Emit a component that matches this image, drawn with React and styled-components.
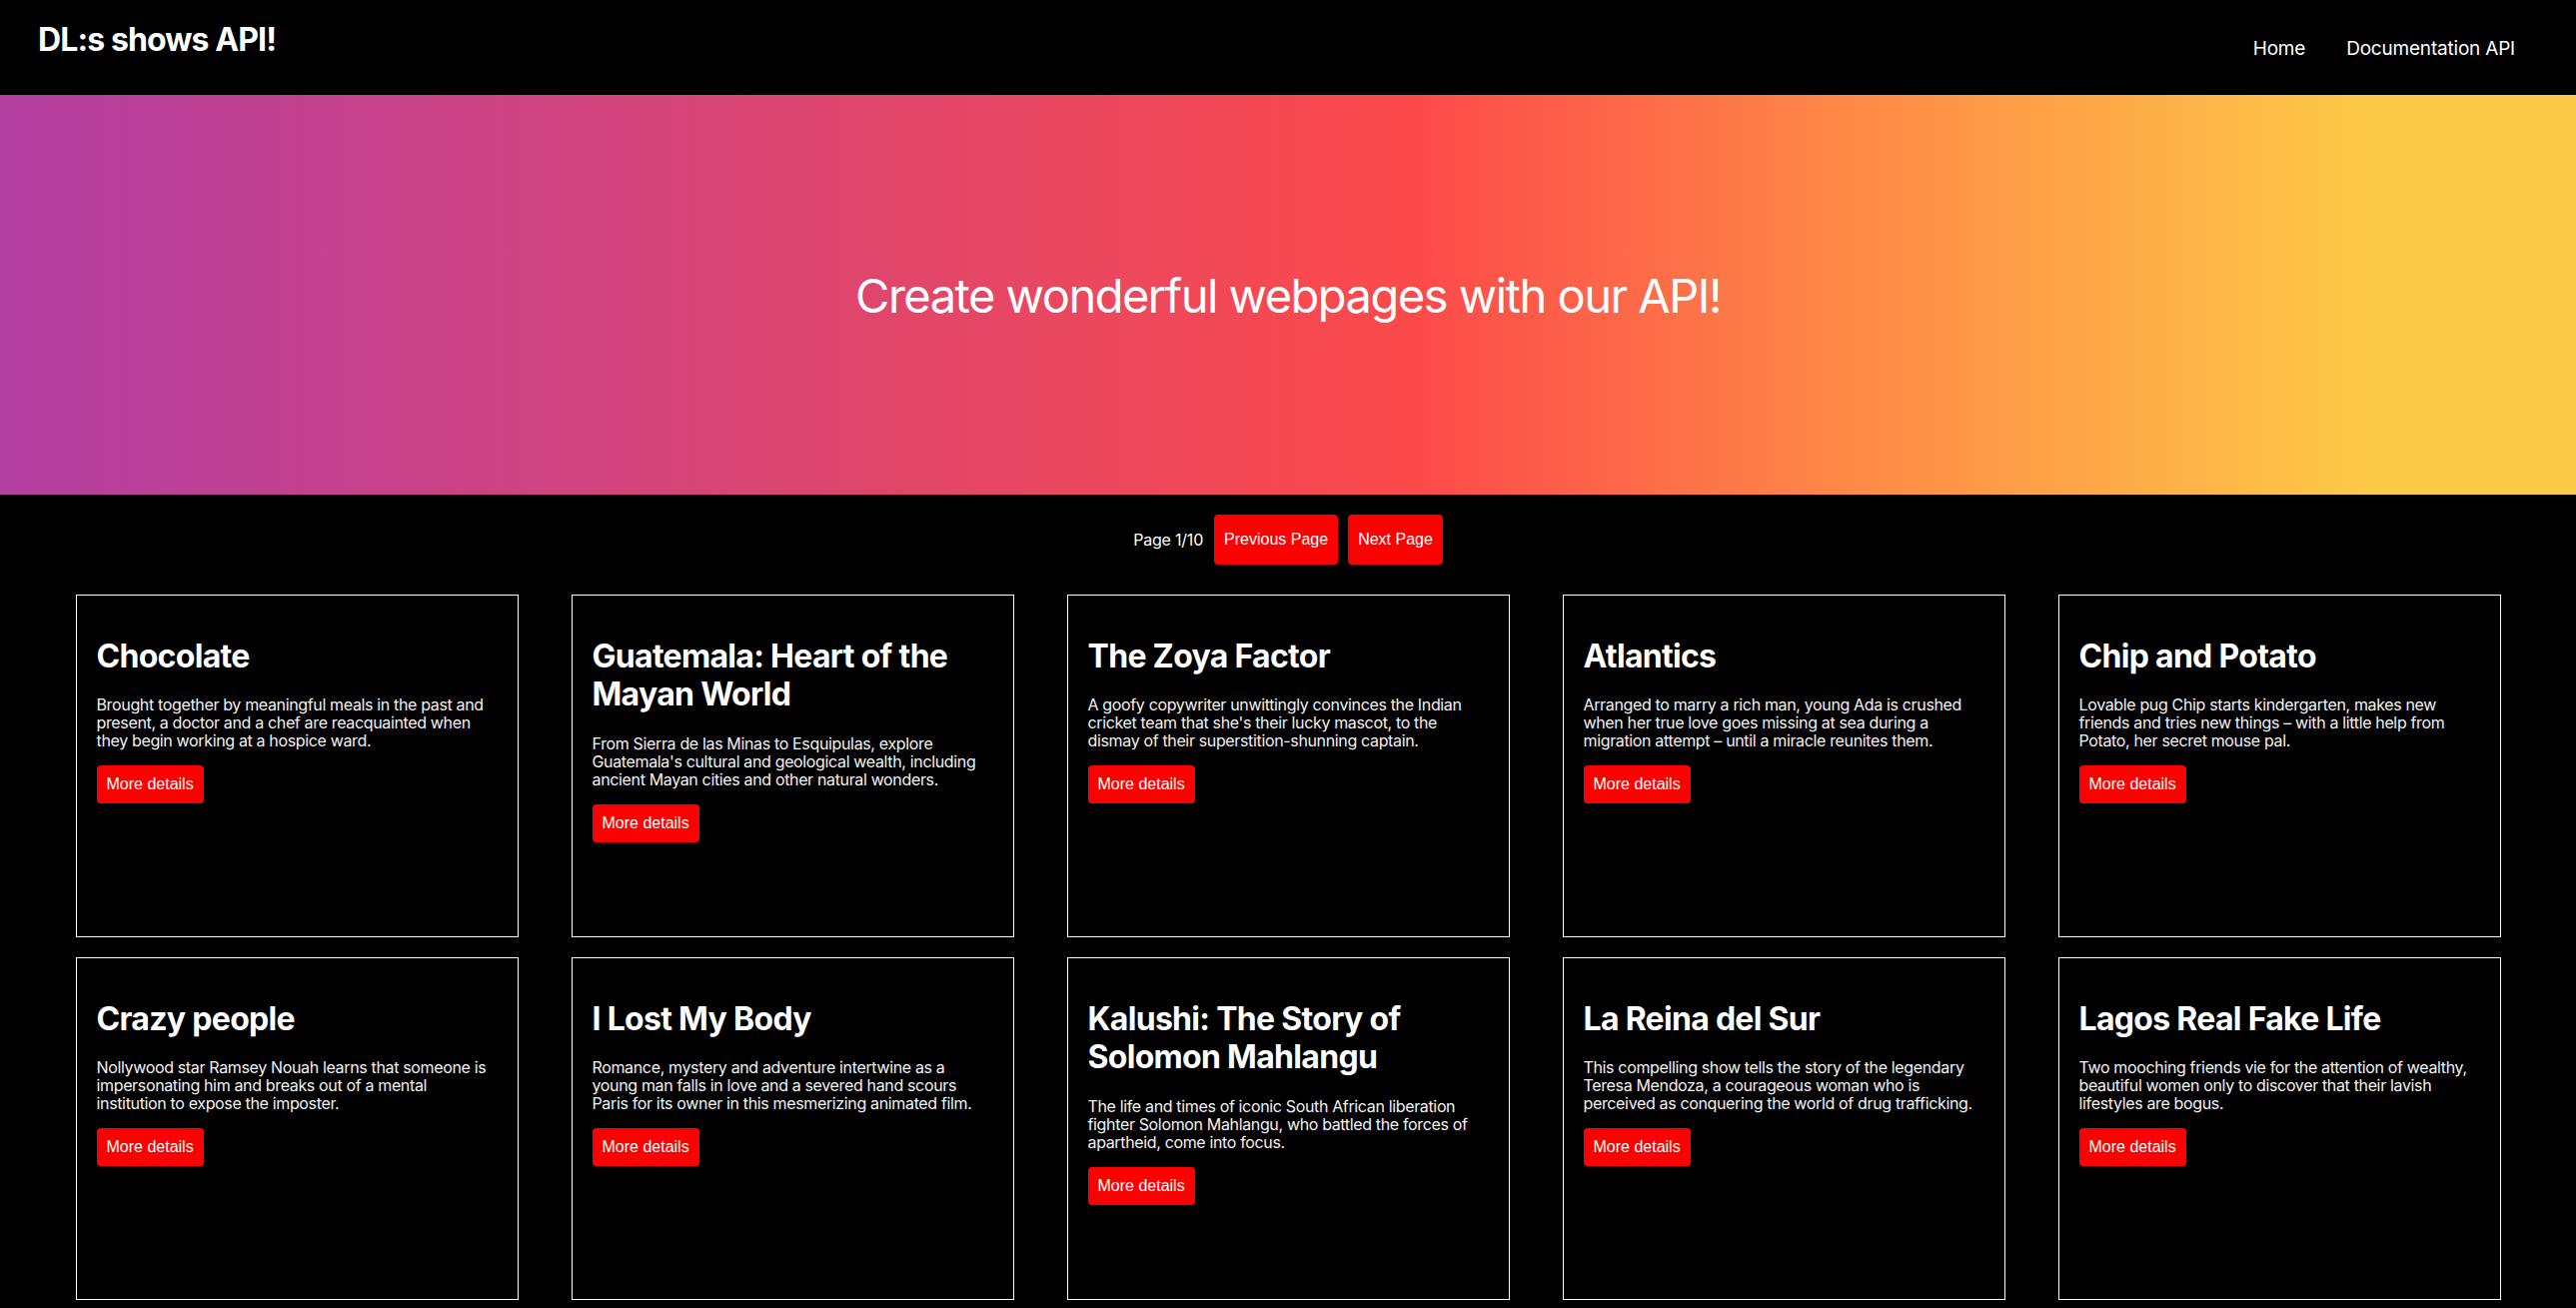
import React from "react";
import styled, { createGlobalStyle } from "styled-components";

const GlobalStyle = createGlobalStyle`
  html, body {
    margin: 0;
    padding: 0;
    background: #000;
  }
  body {
    font-family: Inter, "Noto Sans", sans-serif;
    color: #fff;
  }
  * { box-sizing: border-box; }
`;

const Page = styled.div`
  background: #000;
  min-height: 100vh;
`;

const Nav = styled.header`
  height: 95px;
  display: flex;
  align-items: center;
  justify-content: space-between;
  padding: 0 61px 0 38px;
`;

const Brand = styled.h1`
  margin: 0 0 14px;
  font-size: 32px;
  font-weight: 700;
  line-height: 1.2;
  letter-spacing: -0.9px;
`;

const Links = styled.nav`
  display: flex;
  gap: 41px;
  margin-top: 2px;
`;

const NavLink = styled.a`
  color: #fff;
  text-decoration: none;
  font-size: 19px;
  letter-spacing: -0.2px;
`;

const Hero = styled.section`
  height: 400px;
  display: flex;
  align-items: center;
  justify-content: center;
  background: linear-gradient(
    90deg,
    #b33fa2 0%,
    #d4447a 25%,
    #fc4a4a 55%,
    #fe8a47 72%,
    #fdca47 92%,
    #fdca47 100%
  );
`;

const HeroTitle = styled.h2`
  margin: 0;
  font-size: 47px;
  font-weight: 400;
  letter-spacing: -1.5px;
`;

const Pager = styled.div`
  display: flex;
  align-items: center;
  justify-content: center;
  gap: 10px;
  padding: 20px 0 30px;
`;

const PageLabel = styled.span`
  font-size: 16px;
  margin-right: 1px;
  letter-spacing: -0.2px;
`;

const RedButton = styled.button`
  background: #ff0000;
  color: #fff;
  border: none;
  border-radius: 4px;
  font-family: "Liberation Sans", Arial, sans-serif;
  font-size: 16px;
  padding: 0 10px;
  height: ${(p) => (p.$tall ? "50px" : "38px")};
  cursor: pointer;
`;

const Grid = styled.main`
  display: grid;
  grid-template-columns: repeat(5, 443px);
  column-gap: 53px;
  row-gap: 20px;
  justify-content: center;
  padding-bottom: 20px;
`;

const Card = styled.article`
  border: 1px solid #fff;
  height: 343px;
  padding: 42px 21px 0 20px;
  display: flex;
  flex-direction: column;
  align-items: flex-start;
`;

const CardTitle = styled.h3`
  margin: 0;
  font-size: 32px;
  font-weight: 700;
  line-height: 1.2;
  letter-spacing: -0.7px;
`;

const CardText = styled.p`
  margin: 20px 0 16px;
  font-size: 16px;
  line-height: 18px;
  letter-spacing: -0.35px;
  color: #f2f2f2;
`;

const shows = [
  {
    title: "Chocolate",
    text: "Brought together by meaningful meals in the past and present, a doctor and a chef are reacquainted when they begin working at a hospice ward.",
  },
  {
    title: "Guatemala: Heart of the Mayan World",
    text: "From Sierra de las Minas to Esquipulas, explore Guatemala's cultural and geological wealth, including ancient Mayan cities and other natural wonders.",
  },
  {
    title: "The Zoya Factor",
    text: "A goofy copywriter unwittingly convinces the Indian cricket team that she's their lucky mascot, to the dismay of their superstition-shunning captain.",
  },
  {
    title: "Atlantics",
    text: "Arranged to marry a rich man, young Ada is crushed when her true love goes missing at sea during a migration attempt – until a miracle reunites them.",
  },
  {
    title: "Chip and Potato",
    text: "Lovable pug Chip starts kindergarten, makes new friends and tries new things – with a little help from Potato, her secret mouse pal.",
  },
  {
    title: "Crazy people",
    text: "Nollywood star Ramsey Nouah learns that someone is impersonating him and breaks out of a mental institution to expose the imposter.",
  },
  {
    title: "I Lost My Body",
    text: "Romance, mystery and adventure intertwine as a young man falls in love and a severed hand scours Paris for its owner in this mesmerizing animated film.",
  },
  {
    title: "Kalushi: The Story of Solomon Mahlangu",
    text: "The life and times of iconic South African liberation fighter Solomon Mahlangu, who battled the forces of apartheid, come into focus.",
  },
  {
    title: "La Reina del Sur",
    text: "This compelling show tells the story of the legendary Teresa Mendoza, a courageous woman who is perceived as conquering the world of drug trafficking.",
  },
  {
    title: "Lagos Real Fake Life",
    text: "Two mooching friends vie for the attention of wealthy, beautiful women only to discover that their lavish lifestyles are bogus.",
  },
];

export default function App() {
  return (
    <Page>
      <GlobalStyle />
      <Nav>
        <Brand>DL:s shows API!</Brand>
        <Links>
          <NavLink href="#">Home</NavLink>
          <NavLink href="#">Documentation API</NavLink>
        </Links>
      </Nav>
      <Hero>
        <HeroTitle>Create wonderful webpages with our API!</HeroTitle>
      </Hero>
      <Pager>
        <PageLabel>Page 1/10</PageLabel>
        <RedButton $tall>Previous Page</RedButton>
        <RedButton $tall>Next Page</RedButton>
      </Pager>
      <Grid>
        {shows.map((s) => (
          <Card key={s.title}>
            <CardTitle>{s.title}</CardTitle>
            <CardText>{s.text}</CardText>
            <RedButton>More details</RedButton>
          </Card>
        ))}
      </Grid>
    </Page>
  );
}
